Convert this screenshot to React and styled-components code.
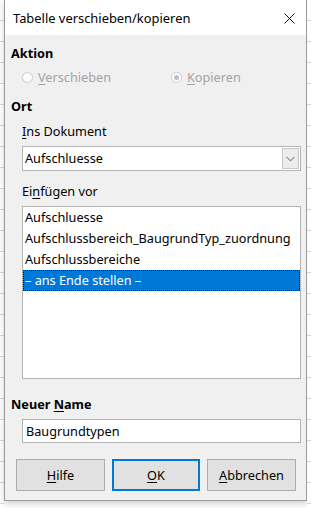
import React from 'react';
import styled, { createGlobalStyle } from 'styled-components';

const GlobalStyle = createGlobalStyle`
  html, body {
    margin: 0;
    padding: 0;
    background: #ffffff;
  }
  body {
    font-family: "Noto Sans", "Open Sans", sans-serif;
    font-size: 12.7px;
    color: #000;
  }
`;

const Page = styled.div`
  width: 311px;
  height: 508px;
  overflow: hidden;
  display: flex;
  justify-content: space-between;
  background: #fbfbfb;
`;

const SheetEdge = styled.div`
  width: ${(p) => p.w}px;
  background: repeating-linear-gradient(
    to bottom,
    #ffffff 0px,
    #ffffff 20px,
    #d4d4d4 20px,
    #d4d4d4 21px
  );
`;

const Dialog = styled.div`
  width: 303px;
  height: 501px;
  box-sizing: border-box;
  border: 1px solid #9a9a9a;
  border-top: none;
  background: #f0f0f0;
  display: flex;
  flex-direction: column;
  box-shadow: 0 2px 6px rgba(0, 0, 0, 0.18);
`;

const TitleBar = styled.div`
  height: 35px;
  flex: none;
  background: #ffffff;
  display: flex;
  align-items: center;
  justify-content: space-between;
  padding: 1px 0 0 8px;
  box-sizing: border-box;
`;

const Title = styled.span`
  font-size: 12.9px;
  color: #000;
`;

const CloseButton = styled.div`
  width: 34px;
  height: 35px;
  display: flex;
  align-items: center;
  justify-content: center;
`;

const Body = styled.div`
  display: flex;
  flex-direction: column;
  padding: 9px 5px 0 6px;
`;

const Heading = styled.div`
  height: 18px;
  line-height: 18px;
  font-weight: 700;
  margin-top: ${(p) => p.mt || 0}px;
`;

const Indented = styled.div`
  margin-left: 11px;
  margin-top: ${(p) => p.mt || 0}px;
  display: flex;
  flex-direction: column;
  gap: 5px;
`;

const Label = styled.div`
  height: 19px;
  line-height: 19px;
  color: ${(p) => (p.disabled ? '#a3a3a3' : '#000')};
`;

const U = styled.span`
  text-decoration: underline;
  text-underline-offset: 2px;
`;

const RadioRow = styled.div`
  display: flex;
  align-items: center;
  height: 18px;
  margin-top: 6px;
  margin-left: 11px;
`;

const RadioItem = styled.label`
  display: flex;
  align-items: center;
  gap: 5px;
  width: ${(p) => p.w}px;
  color: #a3a3a3;
`;

const RadioCircle = styled.span`
  width: 11px;
  height: 11px;
  box-sizing: border-box;
  border-radius: 50%;
  border: 1px solid #cccccc;
  background: #fdfdfd;
  display: flex;
  align-items: center;
  justify-content: center;

  &::after {
    content: '';
    display: ${(p) => (p.checked ? 'block' : 'none')};
    width: 5px;
    height: 5px;
    border-radius: 50%;
    background: #c0c0c0;
  }
`;

const Combo = styled.div`
  height: 25px;
  box-sizing: border-box;
  border: 1px solid #b4b4b4;
  background: #fff;
  display: flex;
  align-items: stretch;
`;

const ComboText = styled.div`
  flex: 1;
  line-height: 23px;
  padding-left: 2px;
`;

const ComboButton = styled.div`
  width: 17px;
  margin: 1px;
  box-sizing: border-box;
  border: 1px solid #c8c8c8;
  background: #ececec;
  display: flex;
  align-items: center;
  justify-content: center;
`;

const ListBox = styled.div`
  height: 173px;
  box-sizing: border-box;
  border: 1px solid #b4b4b4;
  background: #fff;
  display: flex;
  flex-direction: column;
`;

const ListItem = styled.div`
  height: 21px;
  line-height: 21px;
  padding-left: 2px;
  white-space: nowrap;
  background: ${(p) => (p.selected ? '#0078d7' : 'transparent')};
  color: ${(p) => (p.selected ? '#fff' : '#000')};
  outline: ${(p) => (p.selected ? '1px dotted #1a1a1a' : 'none')};
  outline-offset: -1px;
`;

const TextInput = styled.div`
  height: 24px;
  box-sizing: border-box;
  border: 1px solid #b4b4b4;
  background: #fff;
  line-height: 22px;
  padding-left: 3px;
`;

const ButtonRow = styled.div`
  display: grid;
  grid-template-columns: 89px 88px 89px;
  column-gap: 7px;
  margin: 16px 0 0 5px;
`;

const Button = styled.div`
  height: 32px;
  box-sizing: border-box;
  border: ${(p) => (p.primary ? '2px solid #0078d7' : '1px solid #adadad')};
  background: #e1e1e1;
  display: flex;
  align-items: center;
  justify-content: center;
`;

const BottomStrip = styled.div`
  height: 7px;
`;

const Chevron = () => (
  <svg width="9" height="6" viewBox="0 0 9 6">
    <path d="M0.5 0.8 L4.5 4.8 L8.5 0.8" fill="none" stroke="#8a8a8a" strokeWidth="1.1" />
  </svg>
);

const CloseIcon = () => (
  <svg width="11" height="11" viewBox="0 0 11 11">
    <path d="M0.5 0.5 L10.5 10.5 M10.5 0.5 L0.5 10.5" stroke="#111" strokeWidth="1" />
  </svg>
);

const tables = ['Aufschluesse', 'Aufschlussbereich_BaugrundTyp_zuordnung', 'Aufschlussbereiche'];

export default function App() {
  return (
    <>
      <GlobalStyle />
      <Page>
        <SheetEdge w={4} />
        <div>
          <Dialog>
            <TitleBar>
              <Title>Tabelle verschieben/kopieren</Title>
              <CloseButton>
                <CloseIcon />
              </CloseButton>
            </TitleBar>
            <Body>
              <Heading>Aktion</Heading>
              <RadioRow>
                <RadioItem w={149}>
                  <RadioCircle />
                  <span><U>V</U>erschieben</span>
                </RadioItem>
                <RadioItem w={110}>
                  <RadioCircle checked />
                  <span><U>K</U>opieren</span>
                </RadioItem>
              </RadioRow>

              <Heading mt={11}>Ort</Heading>
              <Indented mt={7}>
                <Label><U>I</U>ns Dokument</Label>
                <Combo>
                  <ComboText>Aufschluesse</ComboText>
                  <ComboButton>
                    <Chevron />
                  </ComboButton>
                </Combo>
              </Indented>

              <Indented mt={11}>
                <Label>Ei<U>n</U>fügen vor</Label>
                <ListBox>
                  {tables.map((t) => (
                    <ListItem key={t}>{t}</ListItem>
                  ))}
                  <ListItem selected>– ans Ende stellen –</ListItem>
                </ListBox>
              </Indented>

              <Heading mt={16}>Neuer <U>N</U>ame</Heading>
              <Indented mt={6}>
                <TextInput>Baugrundtypen</TextInput>
              </Indented>

              <ButtonRow>
                <Button><span><U>H</U>ilfe</span></Button>
                <Button primary><span><U>O</U>K</span></Button>
                <Button><span><U>A</U>bbrechen</span></Button>
              </ButtonRow>
            </Body>
          </Dialog>
          <BottomStrip />
        </div>
        <SheetEdge w={4} />
      </Page>
    </>
  );
}
